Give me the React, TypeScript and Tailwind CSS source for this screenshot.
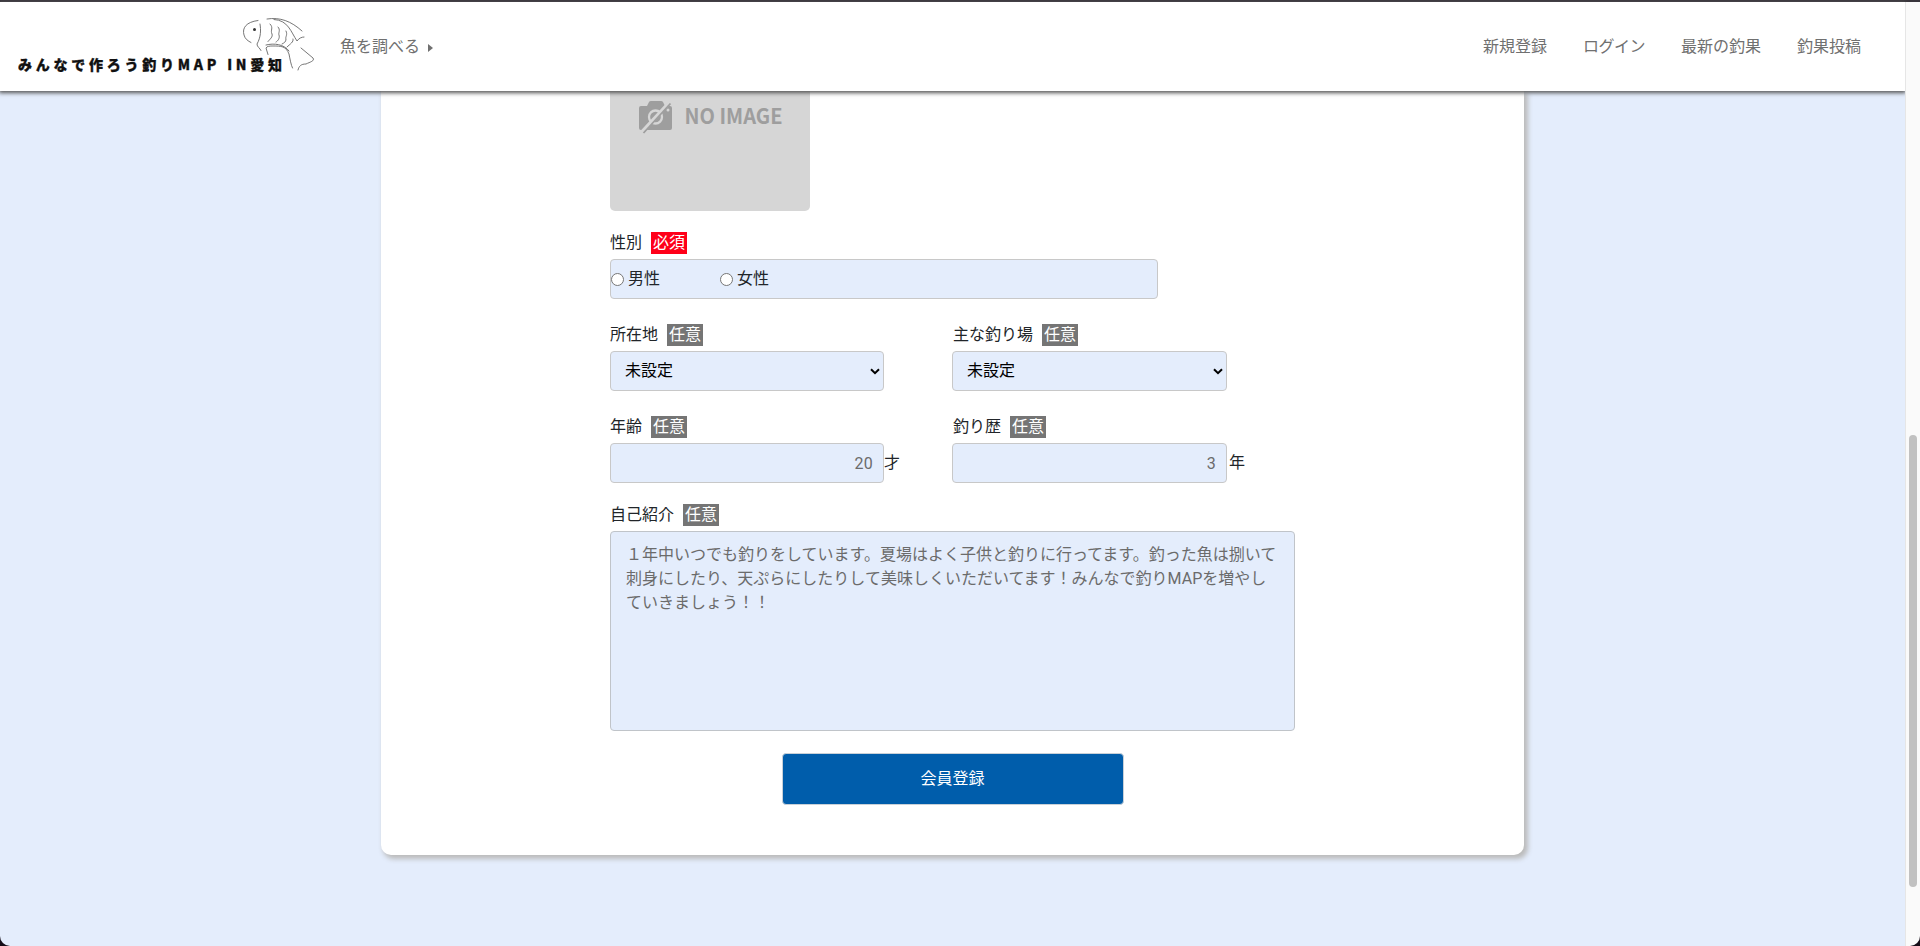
import React from "react";

const navLinks = [
  { label: "新規登録", width: "w-16" },
  { label: "ログイン", width: "w-[62px] tracking-[-0.5px]" },
  { label: "最新の釣果", width: "w-20" },
  { label: "釣果投稿", width: "w-16" },
];

function Label({ text, required = false }: { text: string; required?: boolean }) {
  return (
    <div className="flex h-[22px] items-center gap-[9px] leading-[22px]">
      <span>{text}</span>
      <span className={required ? "bg-[#ff0019] px-0.5 text-white" : "bg-[#757575] px-0.5 text-white"}>
        {required ? "必須" : "任意"}
      </span>
    </div>
  );
}

function Select() {
  return (
    <button className="mt-[5px] flex h-10 w-full items-center justify-between rounded border border-[#c8c8c8] bg-[#e4edfc] pr-[3px] pl-3.5 text-black">
      <span>未設定</span>
      <svg width="10" height="7" viewBox="0 0 10 7" fill="none" stroke="currentColor" strokeWidth="2">
        <path d="M1 1.2 5 5.2 9 1.2" />
      </svg>
    </button>
  );
}

function NumberField({ placeholder, unit, gap }: { placeholder: string; unit: string; gap: string }) {
  return (
    <div className="mt-[5px] flex items-center">
      <input
        className="h-10 w-full shrink-0 rounded border border-[#c8c8c8] bg-[#e4edfc] pr-2.5 text-right tracking-[0.2px] placeholder:text-[#6b6b6b]"
        placeholder={placeholder}
      />
      <span className={gap}>{unit}</span>
    </div>
  );
}

function Radio({ label }: { label: string }) {
  return (
    <label className="flex w-[109px] items-center gap-1">
      <span className="size-[13px] rounded-full border border-[#767676] bg-white" />
      {label}
    </label>
  );
}

function Logo() {
  return (
    <svg className="shrink-0" width="300" height="62" viewBox="0 0 300 62">
      <text
        x="0"
        y="54"
        fontSize="14"
        fontWeight="900"
        fill="#111"
        stroke="#111"
        strokeWidth="0.3"
        textLength="264"
        fontFamily="'Noto Sans CJK JP', sans-serif"
      >
        みんなで作ろう釣りMAP IN愛知
      </text>
      <g fill="none" stroke="#666" strokeWidth="0.9" strokeLinecap="round">
        <path d="M240 4.500C228 6 224 12 226 19C227 23 230 25 233 26.5" />
        <path d="M242 8C243 14 243 21 239 28C239 31 242 32 243 34.5" />
        <path d="M249 3C262 1 273 5 284 15" />
        <path d="M256 3.500C270 4 273 16 279 25C281 22 284 21 286 21" />
        <path d="M252 8C256 12 252 14 254 18C255 21 252 23 250 25.500" />
        <path d="M260 11C263 14 260 17 261 19C262 22 260 25 258 26" />
        <path d="M268 15C270 19 267 21 268 23C268 26 266 27 264 28" />
        <path d="M275 23C276 26 272 28 269 31" />
        <path d="M250 38.500L248 32C249 30 252 30 255 30C263 30 268 30 271 38C272 43 273 49 274.500 52" />
        <path d="M248 29C256 27 266 28 271 35" />
        <path d="M283 32L295 42C297 45 292 46 288 48C283 48 281 50 280 54" />
      </g>
      <circle cx="236.500" cy="13.500" r="1.500" fill="#333" />
    </svg>
  );
}

function NoImage() {
  return (
    <div className="flex h-[120px] w-[200px] items-start gap-[13px] rounded-b-[5px] bg-[#d6d6d6] pt-[9px] pl-[29px]">
      <svg width="33" height="35" viewBox="0 0 33 35">
        <path
          fill="#9e9e9e"
          d="M2 6h6l2-4q.5-1 2-1h10q1.500 0 2 1l2 4h5q2 0 2 2v20q0 2-2 2H2q-2 0-2-2V8q0-2 2-2z"
        />
        <circle cx="16.500" cy="17" r="6.500" fill="none" stroke="#d6d6d6" strokeWidth="2.300" />
        <circle cx="29" cy="10" r="1.500" fill="#d6d6d6" />
        <path d="M3 32 31 2" stroke="#d6d6d6" strokeWidth="4" />
        <path d="M4.500 33 31.500 3.500" stroke="#9e9e9e" strokeWidth="1.800" />
      </svg>
      <svg className="mt-[4px] overflow-visible" width="98" height="26" viewBox="0 0 98 26">
        <text
          x="-0.5"
          y="19.500"
          fontSize="21"
          fontWeight="700"
          fill="#9e9e9e"
          textLength="98"
          lengthAdjust="spacingAndGlyphs"
          fontFamily="'Noto Sans CJK JP', sans-serif"
        >
          NO IMAGE
        </text>
      </svg>
    </div>
  );
}

export default function App() {
  return (
    <div
      lang="ja"
      className="h-[946px] w-[1920px] overflow-hidden bg-[#150d18] font-[Roboto,'Noto_Sans_CJK_JP',sans-serif] text-base text-[#212529]"
    >
      <div className="flex h-full flex-col overflow-hidden rounded-b-[10px]">
        <div className="h-0.5 shrink-0 bg-[#38343b]" />
        <div className="flex min-h-0 grow">
          <div className="flex w-[1905px] flex-col bg-[#e4edfc]">
            <header className="z-10 flex h-[89px] shrink-0 items-center bg-white pr-11 pl-[18px] text-[#707070] shadow-[0_1px_4px_1px_#555]">
              <Logo />
              <nav className="flex grow items-center justify-between pl-[22px]">
                <div className="flex items-center gap-2">
                  <span>魚を調べる</span>
                  <svg className="mt-0.5" width="5" height="8" viewBox="0 0 5 8" fill="currentColor">
                    <path d="M0 0 5 4 0 8z" />
                  </svg>
                </div>
                <div className="flex items-center gap-9">
                  {navLinks.map((l) => (
                    <span key={l.label} className={l.width + " whitespace-nowrap"}>
                      {l.label}
                    </span>
                  ))}
                </div>
              </nav>
            </header>
            <main className="ml-[381px] h-[764px] w-[1143px] rounded-b-[10px] bg-white pl-[229px] shadow-[3px_3px_5px_1px_#bbb]">
              <NoImage />
              <div className="mt-[21px] w-[548px]">
                <Label text="性別" required />
                <div className="mt-[5px] flex h-10 items-center rounded border border-[#c8c8c8] bg-[#e4edfc]">
                  <Radio label="男性" />
                  <Radio label="女性" />
                </div>
              </div>
              <div className="mt-[25px] grid grid-cols-[274px_275px] gap-x-[68px] gap-y-[25px]">
                <div>
                  <Label text="所在地" />
                  <Select />
                </div>
                <div>
                  <div className="pl-px">
                    <Label text="主な釣り場" />
                  </div>
                  <Select />
                </div>
                <div>
                  <Label text="年齢" />
                  <NumberField placeholder="20" unit="才" gap="" />
                </div>
                <div>
                  <div className="pl-px">
                    <Label text="釣り歴" />
                  </div>
                  <NumberField placeholder="3" unit="年" gap="ml-0.5" />
                </div>
              </div>
              <div className="mt-[21px] w-[685px]">
                <Label text="自己紹介" />
                <textarea
                  className="mt-[5px] block h-[200px] w-full resize-none rounded border border-[#c0c4c9] bg-[#e4edfc] px-[15px] py-[11px] leading-6 placeholder:text-[#6b6b6b]"
                  placeholder="１年中いつでも釣りをしています。夏場はよく子供と釣りに行ってます。釣った魚は捌いて刺身にしたり、天ぷらにしたりして美味しくいただいてます！みんなで釣りMAPを増やしていきましょう！！"
                />
                <button className="mx-auto mt-[22px] block h-[52px] w-[342px] rounded border border-[#c8d0d8] bg-[#005dab] text-white">
                  会員登録
                </button>
              </div>
            </main>
          </div>
          <div className="z-20 flex w-[15px] justify-center border-l border-[#e6e6e6] bg-[#fafafa] pt-[433px]">
            <div className="h-[452px] w-2 rounded-full bg-[#c1c1c1]" />
          </div>
        </div>
      </div>
    </div>
  );
}
